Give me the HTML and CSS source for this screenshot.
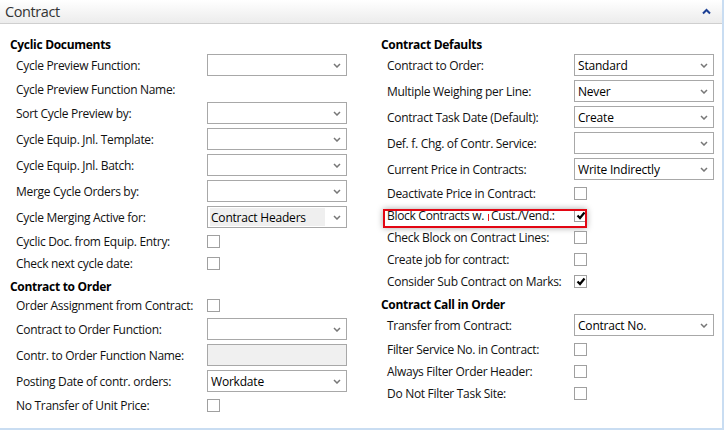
FILE: index.html
```html
<!DOCTYPE html>
<html>
<head>
<meta charset="utf-8">
<link rel="stylesheet" href="styles.css">
</head>
<body>
<div class="panel">
  <div class="panel-head">
    <span class="title">Contract</span>
    <svg class="collapse" width="9" height="7" viewBox="0 0 9 7"><path d="M1 5.5 L4.5 2 L8 5.5" fill="none" stroke="#1b3f94" stroke-width="2"/></svg>
  </div>
  <div class="panel-body">
    <div class="col col-left">
      <div class="group-title">Cyclic Documents</div>
      <div class="row sel"><span class="label">Cycle Preview Function:</span><div class="select"><span class="val"></span><svg class="chev" width="8" height="5" viewBox="0 0 8 5"><path d="M1 1 L4 4 L7 1" fill="none" stroke="#777" stroke-width="1.5"/></svg></div></div>
      <div class="row"><span class="label">Cycle Preview Function Name:</span></div>
      <div class="row sel"><span class="label">Sort Cycle Preview by:</span><div class="select"><span class="val"></span><svg class="chev" width="8" height="5" viewBox="0 0 8 5"><path d="M1 1 L4 4 L7 1" fill="none" stroke="#777" stroke-width="1.5"/></svg></div></div>
      <div class="row sel"><span class="label">Cycle Equip. Jnl. Template:</span><div class="select"><span class="val"></span><svg class="chev" width="8" height="5" viewBox="0 0 8 5"><path d="M1 1 L4 4 L7 1" fill="none" stroke="#777" stroke-width="1.5"/></svg></div></div>
      <div class="row sel"><span class="label">Cycle Equip. Jnl. Batch:</span><div class="select"><span class="val"></span><svg class="chev" width="8" height="5" viewBox="0 0 8 5"><path d="M1 1 L4 4 L7 1" fill="none" stroke="#777" stroke-width="1.5"/></svg></div></div>
      <div class="row sel"><span class="label">Merge Cycle Orders by:</span><div class="select"><span class="val"></span><svg class="chev" width="8" height="5" viewBox="0 0 8 5"><path d="M1 1 L4 4 L7 1" fill="none" stroke="#777" stroke-width="1.5"/></svg></div></div>
      <div class="row sel"><span class="label">Cycle Merging Active for:</span><div class="select"><span class="val focus">Contract Headers</span><svg class="chev" width="8" height="5" viewBox="0 0 8 5"><path d="M1 1 L4 4 L7 1" fill="none" stroke="#777" stroke-width="1.5"/></svg></div></div>
      <div class="row"><span class="label">Cyclic Doc. from Equip. Entry:</span><span class="check"></span></div>
      <div class="row"><span class="label">Check next cycle date:</span><span class="check"></span></div>
      <div class="group-title">Contract to Order</div>
      <div class="row"><span class="label">Order Assignment from Contract:</span><span class="check"></span></div>
      <div class="row sel"><span class="label">Contract to Order Function:</span><div class="select"><span class="val"></span><svg class="chev" width="8" height="5" viewBox="0 0 8 5"><path d="M1 1 L4 4 L7 1" fill="none" stroke="#777" stroke-width="1.5"/></svg></div></div>
      <div class="row sel"><span class="label">Contr. to Order Function Name:</span><div class="textbox disabled"></div></div>
      <div class="row sel"><span class="label">Posting Date of contr. orders:</span><div class="select"><span class="val">Workdate</span><svg class="chev" width="8" height="5" viewBox="0 0 8 5"><path d="M1 1 L4 4 L7 1" fill="none" stroke="#777" stroke-width="1.5"/></svg></div></div>
      <div class="row"><span class="label">No Transfer of Unit Price:</span><span class="check"></span></div>
    </div>
    <div class="col col-right">
      <div class="group-title">Contract Defaults</div>
      <div class="row sel"><span class="label">Contract to Order:</span><div class="select"><span class="val">Standard</span><svg class="chev" width="8" height="5" viewBox="0 0 8 5"><path d="M1 1 L4 4 L7 1" fill="none" stroke="#777" stroke-width="1.5"/></svg></div></div>
      <div class="row sel"><span class="label">Multiple Weighing per Line:</span><div class="select"><span class="val">Never</span><svg class="chev" width="8" height="5" viewBox="0 0 8 5"><path d="M1 1 L4 4 L7 1" fill="none" stroke="#777" stroke-width="1.5"/></svg></div></div>
      <div class="row sel"><span class="label">Contract Task Date (Default):</span><div class="select"><span class="val">Create</span><svg class="chev" width="8" height="5" viewBox="0 0 8 5"><path d="M1 1 L4 4 L7 1" fill="none" stroke="#777" stroke-width="1.5"/></svg></div></div>
      <div class="row sel"><span class="label">Def. f. Chg. of Contr. Service:</span><div class="select"><span class="val"></span><svg class="chev" width="8" height="5" viewBox="0 0 8 5"><path d="M1 1 L4 4 L7 1" fill="none" stroke="#777" stroke-width="1.5"/></svg></div></div>
      <div class="row sel"><span class="label">Current Price in Contracts:</span><div class="select"><span class="val">Write Indirectly</span><svg class="chev" width="8" height="5" viewBox="0 0 8 5"><path d="M1 1 L4 4 L7 1" fill="none" stroke="#777" stroke-width="1.5"/></svg></div></div>
      <div class="row"><span class="label">Deactivate Price in Contract:</span><span class="check"></span></div>
      <div class="row marked"><span class="label">Block Contracts w. <span class="caret"></span>Cust./Vend.:</span><span class="check on"><svg width="11" height="11" viewBox="0 0 11 11"><path d="M2.5 5.5 L5 8 L9.5 2.5" fill="none" stroke="#000" stroke-width="2.2"/></svg></span><span class="hilite"></span></div>
      <div class="row"><span class="label">Check Block on Contract Lines:</span><span class="check"></span></div>
      <div class="row"><span class="label">Create job for contract:</span><span class="check"></span></div>
      <div class="row"><span class="label">Consider Sub Contract on Marks:</span><span class="check on"><svg width="11" height="11" viewBox="0 0 11 11"><path d="M2.5 5.5 L5 8 L9.5 2.5" fill="none" stroke="#000" stroke-width="2.2"/></svg></span></div>
      <div class="group-title">Contract Call in Order</div>
      <div class="row sel"><span class="label">Transfer from Contract:</span><div class="select"><span class="val">Contract No.</span><svg class="chev" width="8" height="5" viewBox="0 0 8 5"><path d="M1 1 L4 4 L7 1" fill="none" stroke="#777" stroke-width="1.5"/></svg></div></div>
      <div class="row"><span class="label">Filter Service No. in Contract:</span><span class="check"></span></div>
      <div class="row"><span class="label">Always Filter Order Header:</span><span class="check"></span></div>
      <div class="row"><span class="label">Do Not Filter Task Site:</span><span class="check"></span></div>
    </div>
  </div>
</div>
</body>
</html>
```
FILE: styles.css
```css
html, body {
  margin: 0;
  padding: 0;
  background: #fff;
}
body {
  font-family: "Open Sans", "Noto Sans", sans-serif;
  font-size: 12px;
  color: #000;
}
.panel {
  width: 724px;
  height: 430px;
  box-sizing: border-box;
  border-right: 2px solid #c9ddf2;
  border-bottom: 2px solid #c9ddf2;
  overflow: hidden;
}
.panel-head {
  height: 23px;
  border-bottom: 1px solid #cfcfcf;
  background: linear-gradient(#ffffff, #ececec);
  display: flex;
  align-items: center;
  justify-content: space-between;
  padding: 0 11px 0 5px;
}
.title {
  font-size: 14.5px;
  color: #333;
  letter-spacing: -0.4px;
}
.collapse {
  display: block;
}
.panel-body {
  display: flex;
  padding: 8px 0 0 10px;
  gap: 34px;
}
.col {
  display: flex;
  flex-direction: column;
}
.col-left { width: 337px; }
.col-right { width: 333px; }
.col-left .label { width: 191px; }
.col-right .label { width: 187px; }
.group-title {
  height: 20px;
  display: flex;
  align-items: flex-end;
  font-weight: bold;
  color: #000;
  line-height: 15px;
  box-sizing: border-box;
  letter-spacing: -0.3px;
}
.row {
  height: 22px;
  display: flex;
  align-items: center;
  padding-left: 6px;
  position: relative;
}
.row.sel {
  height: 26px;
}
.label {
  flex: none;
  white-space: nowrap;
  letter-spacing: -0.3px;
  color: #111;
}
.select, .textbox {
  width: 140px;
  height: 22px;
  box-sizing: border-box;
  border: 1px solid #a8a8a8;
  background: #fff;
  display: flex;
  align-items: center;
  padding: 1px 5px 1px 2px;
}
.textbox.disabled {
  background: #f0f0f0;
}
.val {
  flex: 1;
  align-self: stretch;
  display: flex;
  align-items: center;
  padding-left: 1px;
  color: #000;
  letter-spacing: -0.2px;
  white-space: nowrap;
}
.val.focus {
  background: #efefef;
  margin-right: 8px;
}
.chev {
  display: block;
  flex: none;
}
.check {
  width: 13px;
  height: 13px;
  box-sizing: border-box;
  border: 1px solid #a0a0a0;
  background: #fff;
  display: flex;
  align-items: center;
  justify-content: center;
}
.check svg { display: block; }
.caret {
  display: inline-block;
  width: 1px;
  height: 7px;
  background: #e8141c;
  margin: 0 2px 0 1px;
  vertical-align: -1px;
}
.hilite {
  position: absolute;
  left: 2px;
  top: 5px;
  width: 204px;
  height: 19px;
  box-sizing: border-box;
  border: 2px solid #e30613;
  box-shadow: 0 0 6px rgba(0, 0, 0, 0.35);
  pointer-events: none;
}
```
